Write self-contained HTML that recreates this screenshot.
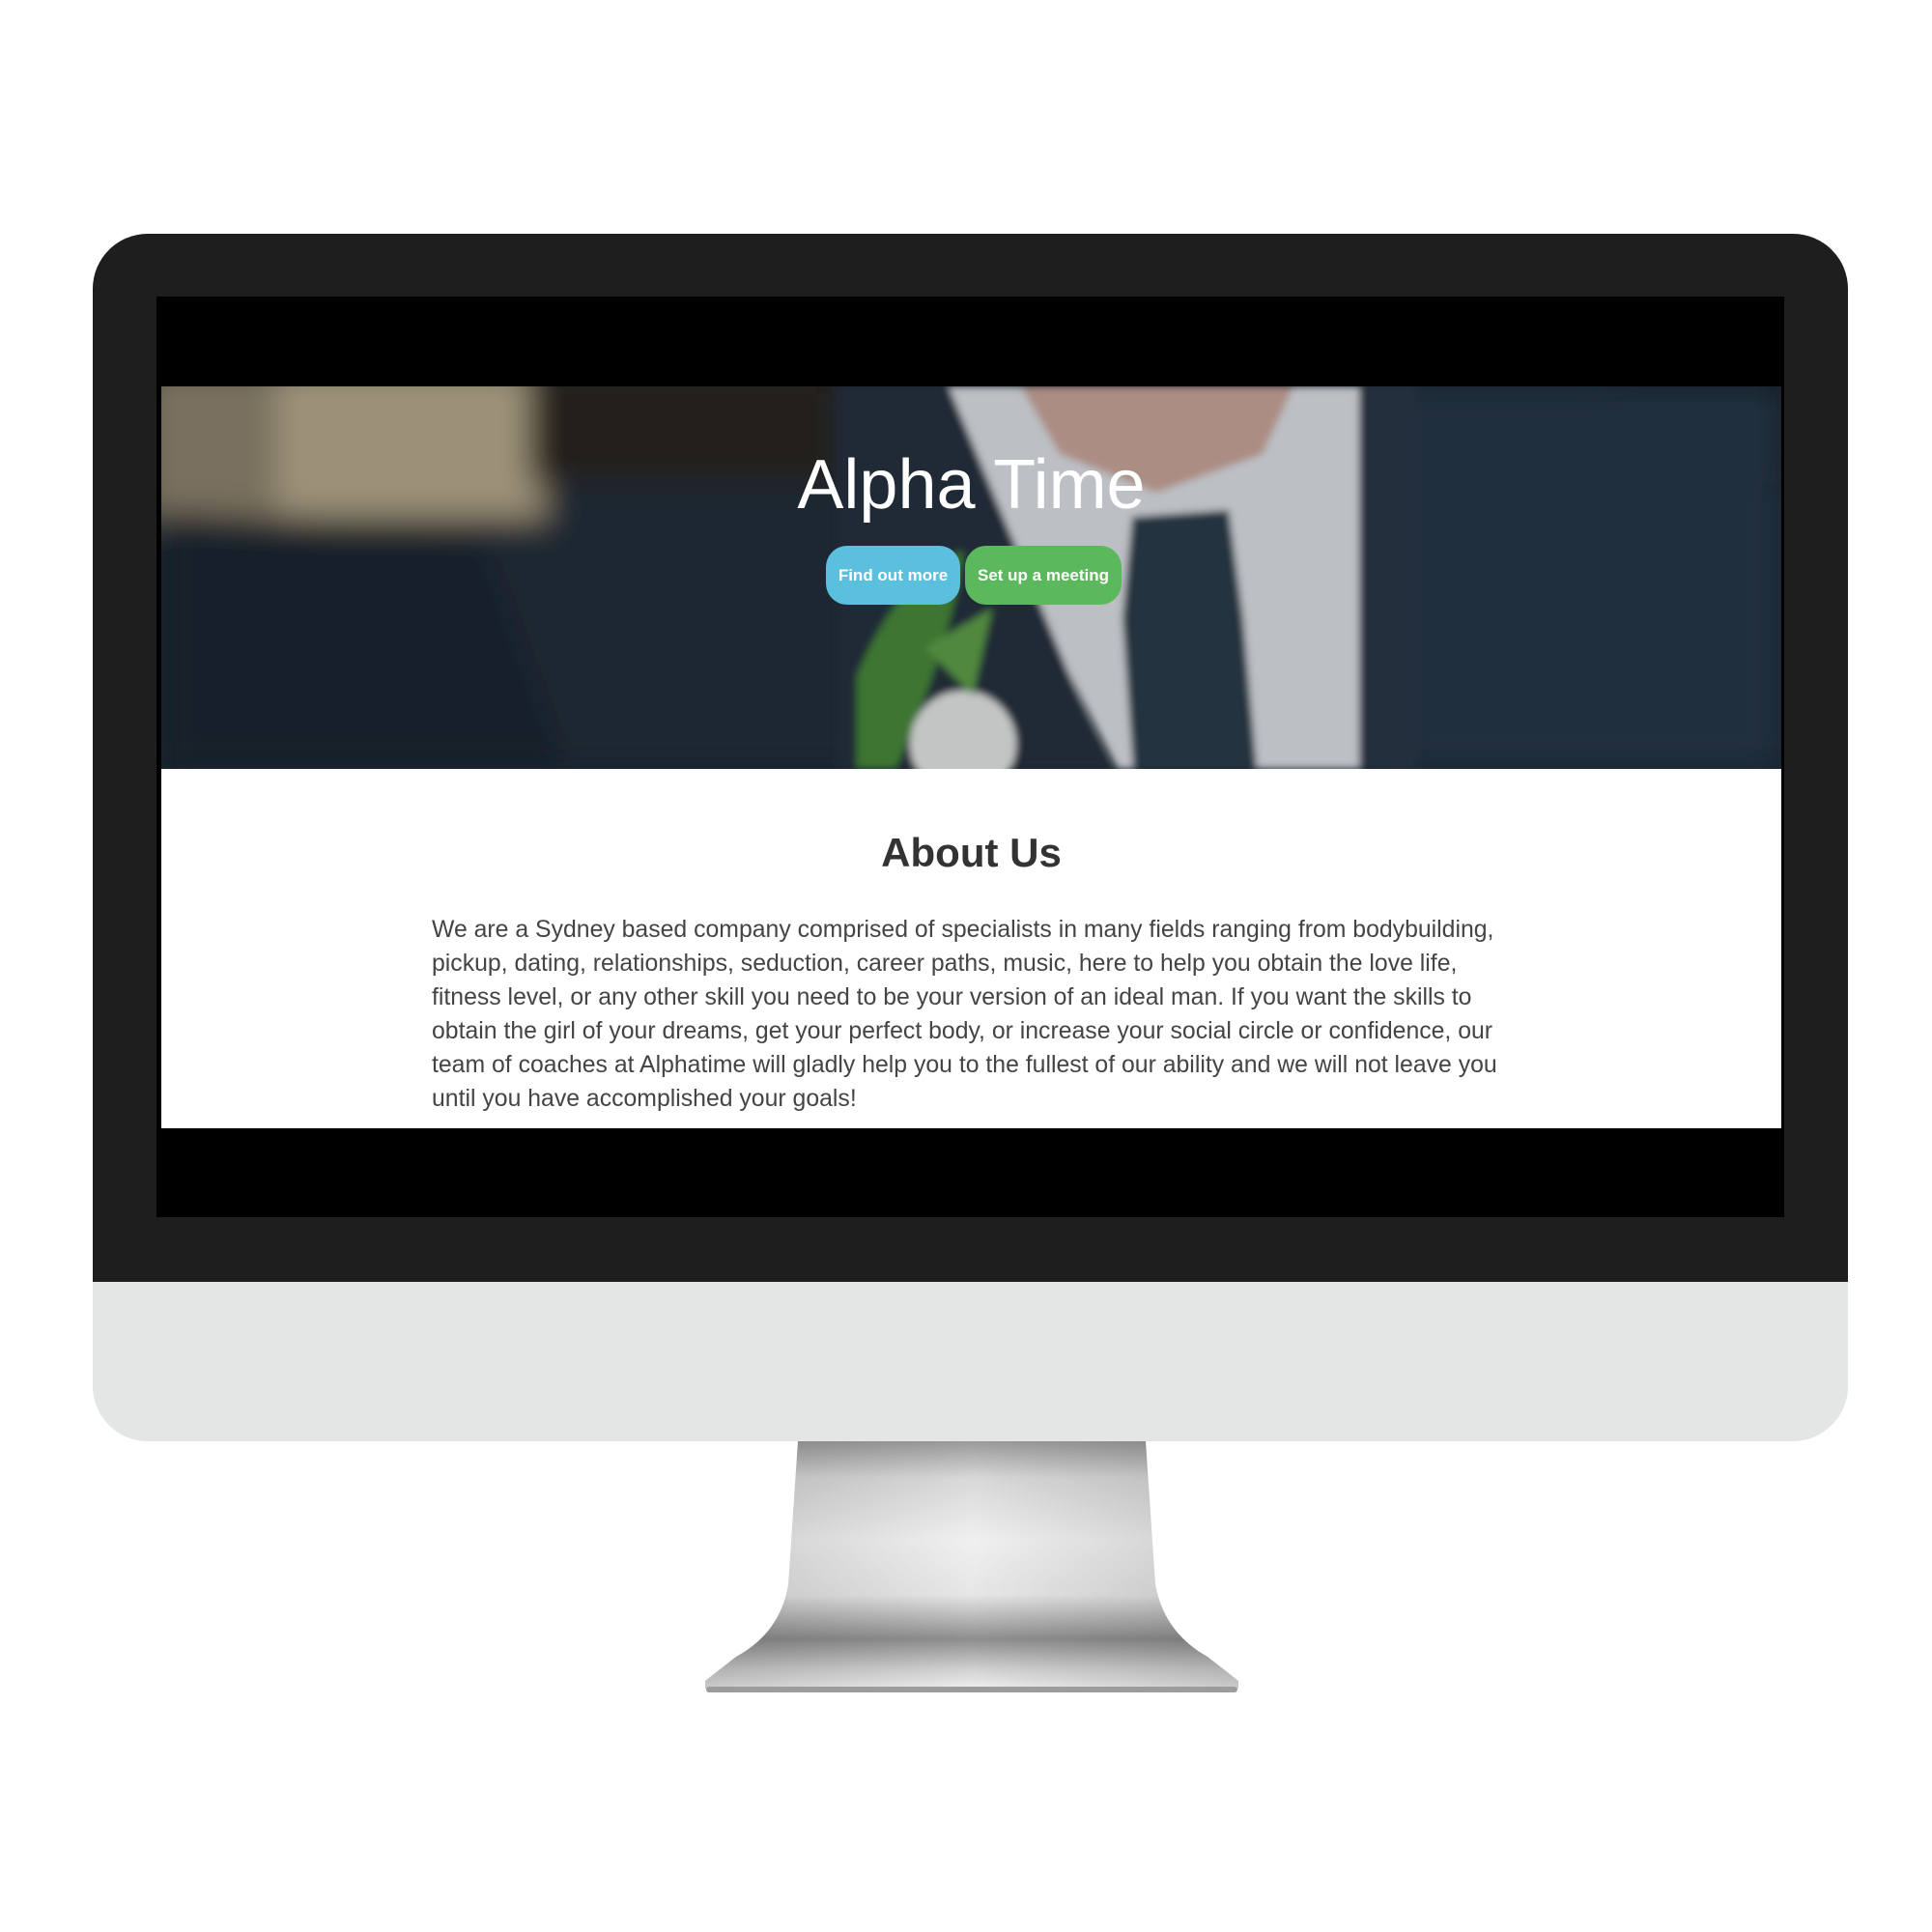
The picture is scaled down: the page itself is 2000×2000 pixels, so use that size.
<!DOCTYPE html>
<html><head><meta charset="utf-8"><style>
html,body{margin:0;padding:0;background:#fff;width:2000px;height:2000px;overflow:hidden;font-family:"Liberation Sans",sans-serif}
.abs{position:absolute}
</style></head><body>
<svg class="abs" style="left:0;top:0" width="2000" height="2000">
<defs>
<linearGradient id="st" x1="0" y1="0" x2="0" y2="1">
<stop offset="0" stop-color="#9a9a9a"/><stop offset="0.15" stop-color="#d8d8d8"/><stop offset="0.4" stop-color="#f0f0f0"/><stop offset="0.62" stop-color="#e6e6e6"/><stop offset="0.8" stop-color="#8e8e8e"/><stop offset="0.92" stop-color="#d0d0d0"/><stop offset="1" stop-color="#efefef"/></linearGradient>
<linearGradient id="sh" x1="0" y1="0" x2="1" y2="0"><stop offset="0" stop-color="#000" stop-opacity=".15"/><stop offset=".5" stop-color="#000" stop-opacity="0"/><stop offset="1" stop-color="#000" stop-opacity=".15"/></linearGradient>
</defs>
<path d="M826 1492 L1186 1492 L1196 1640 Q1205 1690 1250 1715 L1282 1740 L1282 1748 L730 1748 L730 1740 L762 1715 Q808 1690 816 1640 Z" fill="url(#st)"/>
<path d="M826 1492 L1186 1492 L1196 1640 Q1205 1690 1250 1715 L1282 1740 L1282 1748 L730 1748 L730 1740 L762 1715 Q808 1690 816 1640 Z" fill="url(#sh)"/>
<rect x="731" y="1746" width="550" height="6" rx="3" fill="#9c9c9c"/>
</svg>
<div class="abs" style="left:96px;top:242px;width:1817px;height:1250px;border-radius:57px;background:#e4e5e5;overflow:hidden">
  <div class="abs" style="left:0;top:0;width:1817px;height:1085px;background:#1e1e1e"></div>
</div>
<div class="abs" style="left:162px;top:307px;width:1685px;height:953px;background:#000"></div>
<div class="abs" style="left:167px;top:400px;width:1677px;height:396px;overflow:hidden;background:#1d2a36">
<svg width="1677" height="396" style="position:absolute;left:0;top:0">
<defs><filter id="b"><feGaussianBlur stdDeviation="16"/></filter><filter id="b2"><feGaussianBlur stdDeviation="4"/></filter></defs>
<g filter="url(#b)">
<rect x="0" y="0" width="1677" height="396" fill="#222f3b"/>
<rect x="-20" y="-20" width="420" height="160" fill="#8f8470"/>
<rect x="120" y="-20" width="270" height="150" fill="#b8ab8e"/>
<rect x="380" y="-20" width="320" height="120" fill="#2a2520"/>
<rect x="1500" y="-20" width="200" height="120" fill="#151a1f"/>
<path d="M0 130 L330 150 L420 396 L0 396Z" fill="#1d2833"/>
<path d="M1250 0 L1677 0 L1677 396 L1260 396Z" fill="#27394a"/>
</g>
<g filter="url(#b2)">
<path d="M815 0 L1250 0 L1245 396 L990 396 L900 220 Z" fill="#dde1e6"/>
<path d="M890 0 L1172 0 L1140 70 L1030 110 L930 70Z" fill="#caa69b"/>
<path d="M1005 135 L1105 128 L1120 240 L1134 396 L1006 396 L995 240Z" fill="#2c3c4c"/>
<path d="M700 0 L815 0 L981 396 L700 396Z" fill="#26323f"/>
<path d="M1240 0 L1300 0 L1300 396 L1240 396Z" fill="#2a3846"/>
<path d="M720 300 Q760 200 830 170 Q820 260 760 396 L720 396Z" fill="#4a8a3a"/>
<ellipse cx="830" cy="370" rx="55" ry="55" fill="#e4e8e6"/>
<path d="M790 270 L860 230 L840 320Z" fill="#5fa04a"/>
</g>
<rect x="0" y="0" width="1677" height="396" fill="#000" opacity=".15"/>
</svg>
<div class="abs" style="left:0;width:1677px;top:62px;text-align:center;color:#fff;font-size:72px;line-height:80px">Alpha Time</div>
<div class="abs" style="left:688px;top:165px;width:139px;height:61px;border-radius:22px;background:#5bc0de;color:#fff;font-size:17px;font-weight:bold;line-height:61px;text-align:center">Find out more</div>
<div class="abs" style="left:832px;top:165px;width:162px;height:61px;border-radius:22px;background:#5cb85c;color:#fff;font-size:17px;font-weight:bold;line-height:61px;text-align:center">Set up a meeting</div>
</div>
<div class="abs" style="left:167px;top:796px;width:1677px;height:372px;background:#fff">
<div class="abs" style="left:0;width:1677px;top:62px;text-align:center;color:#333;font-size:42px;font-weight:bold;line-height:50px">About Us</div>
<div class="abs" style="left:280px;top:149px;color:#444;font-size:24.8px;line-height:35px;white-space:nowrap">We are a Sydney based company comprised of specialists in many fields ranging from bodybuilding,<br>pickup, dating, relationships, seduction, career paths, music, here to help you obtain the love life,<br>fitness level, or any other skill you need to be your version of an ideal man. If you want the skills to<br>obtain the girl of your dreams, get your perfect body, or increase your social circle or confidence, our<br>team of coaches at Alphatime will gladly help you to the fullest of our ability and we will not leave you<br>until you have accomplished your goals!</div>
</div>
</body></html>
